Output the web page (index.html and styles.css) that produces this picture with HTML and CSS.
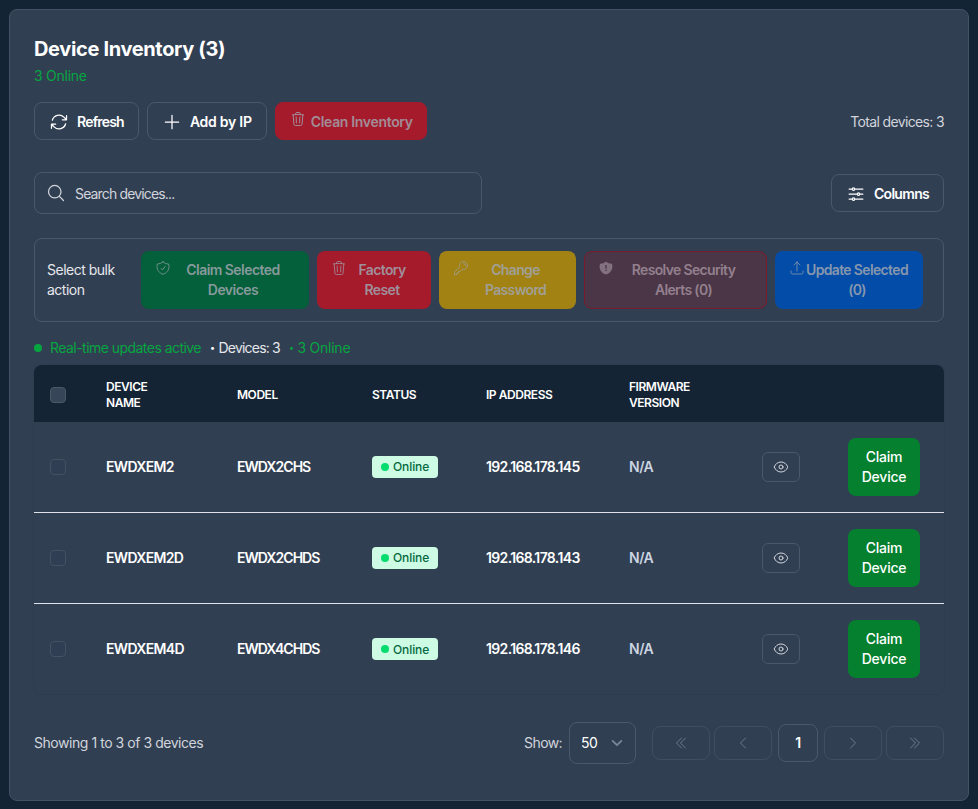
FILE: index.html
```html
<!DOCTYPE html>
<html lang="en">
<head>
    <meta charset="UTF-8">
    <meta name="viewport" content="width=device-width, initial-scale=1.0">
    <title>Device Inventory</title>
    <link rel="stylesheet" href="styles.css">
</head>
<body>
    <div class="card">
        <h1 class="title">Device Inventory (3)</h1>
        <div class="online-count">3 Online</div>

        <div class="toolbar">
            <button class="btn btn-outline btn-refresh">
                <svg class="icon-20" viewBox="0 0 24 24"><path d="M16.023 9.348h4.992v-.001M2.985 19.644v-4.992m0 0h4.992m-4.993 0 3.181 3.183a8.25 8.25 0 0 0 13.803-3.7M4.031 9.865a8.25 8.25 0 0 1 13.803-3.7l3.181 3.182m0-4.991v4.99"/></svg>
                Refresh
            </button>
            <button class="btn btn-outline btn-add">
                <svg class="icon-20" viewBox="0 0 24 24"><path d="M12 4v16m8-8H4"/></svg>
                Add by IP
            </button>
            <button class="btn btn-clean" disabled>
                <svg class="icon-16" viewBox="0 0 24 24"><path d="m14.74 9-.346 9m-4.788 0L9.26 9m9.968-3.21c.342.052.682.107 1.022.166m-1.022-.165L18.16 19.673a2.25 2.25 0 0 1-2.244 2.077H8.084a2.25 2.25 0 0 1-2.244-2.077L4.772 5.79m14.456 0a48.108 48.108 0 0 0-3.478-.397m-12 .562c.34-.059.68-.114 1.022-.165m0 0a48.11 48.11 0 0 1 3.478-.397m7.5 0v-.916c0-1.18-.91-2.164-2.09-2.201a51.964 51.964 0 0 0-3.32 0c-1.18.037-2.09 1.022-2.09 2.201v.916m7.5 0a48.667 48.667 0 0 0-7.5 0"/></svg>
                Clean Inventory
            </button>
            <div class="total">Total devices: 3</div>
        </div>

        <div class="search-row">
            <label class="search">
                <svg class="icon-20" viewBox="0 0 24 24"><path d="m21 21-5.197-5.197m0 0A7.5 7.5 0 1 0 5.196 5.196a7.5 7.5 0 0 0 10.607 10.607Z"/></svg>
                <input class="search-input" type="text" placeholder="Search devices...">
            </label>
            <button class="btn btn-outline btn-columns">
                <svg class="icon-20" viewBox="0 0 24 24"><path d="M10.5 6h9.75M10.5 6a1.5 1.5 0 1 1-3 0m3 0a1.5 1.5 0 1 0-3 0M3.75 6H7.5m3 12h9.75m-9.75 0a1.5 1.5 0 0 1-3 0m3 0a1.5 1.5 0 0 0-3 0m-3.75 0H7.5m9-6h3.75m-3.75 0a1.5 1.5 0 0 1-3 0m3 0a1.5 1.5 0 0 0-3 0m-9.75 0h9.75"/></svg>
                Columns
            </button>
        </div>

        <div class="bulk">
            <div class="bulk-label">Select bulk action</div>
            <button class="bulk-btn bulk-claim" disabled>
                <svg class="icon-16" viewBox="0 0 24 24"><path d="M9 12.75 11.25 15 15 9.75m-3-7.036A11.959 11.959 0 0 1 3.598 6 11.99 11.99 0 0 0 3 9.749c0 5.592 3.824 10.29 9 11.623 5.176-1.332 9-6.03 9-11.622 0-1.31-.21-2.571-.598-3.751h-.152c-3.196 0-6.1-1.248-8.25-3.285Z"/></svg>
                <span class="bulk-text">Claim Selected Devices</span>
            </button>
            <button class="bulk-btn bulk-reset" disabled>
                <svg class="icon-16" viewBox="0 0 24 24"><path d="m14.74 9-.346 9m-4.788 0L9.26 9m9.968-3.21c.342.052.682.107 1.022.166m-1.022-.165L18.16 19.673a2.25 2.25 0 0 1-2.244 2.077H8.084a2.25 2.25 0 0 1-2.244-2.077L4.772 5.79m14.456 0a48.108 48.108 0 0 0-3.478-.397m-12 .562c.34-.059.68-.114 1.022-.165m0 0a48.11 48.11 0 0 1 3.478-.397m7.5 0v-.916c0-1.18-.91-2.164-2.09-2.201a51.964 51.964 0 0 0-3.32 0c-1.18.037-2.09 1.022-2.09 2.201v.916m7.5 0a48.667 48.667 0 0 0-7.5 0"/></svg>
                <span class="bulk-text">Factory Reset</span>
            </button>
            <button class="bulk-btn bulk-password" disabled>
                <svg class="icon-16" viewBox="0 0 24 24"><path d="M15.75 5.25a3 3 0 0 1 3 3m3 0a6 6 0 0 1-7.029 5.912c-.563-.097-1.159.026-1.563.43L10.5 17.25H8.25v2.25H6v2.25H2.25v-2.818c0-.597.237-1.17.659-1.591l6.499-6.499c.404-.404.527-1 .43-1.563A6 6 0 1 1 21.75 8.25Z"/></svg>
                <span class="bulk-text">Change Password</span>
            </button>
            <button class="bulk-btn bulk-resolve" disabled>
                <svg class="icon-16 icon-solid" viewBox="0 0 24 24"><path fill-rule="evenodd" d="M12 2.2c2.3 2.2 5.3 3.4 8.6 3.4h.3c.5 1.4.7 2.8.7 4.2 0 5.8-4 10.6-9.6 12-5.6-1.4-9.6-6.2-9.6-12 0-1.4.2-2.8.7-4.2h.3c3.300 0 6.300-1.200 8.600-3.400ZM11 7.500v5.500h2V7.500h-2Zm0 7v2h2v-2h-2Z"/></svg>
                <span class="bulk-text">Resolve Security Alerts (0)</span>
            </button>
            <button class="bulk-btn bulk-update" disabled>
                <svg class="icon-16" viewBox="0 0 24 24"><path d="M3 16.5v2.250A2.250 2.250 0 0 0 5.250 21h13.500A2.250 2.250 0 0 0 21 18.750V16.500m-13.500-9L12 3m0 0 4.500 4.500M12 3v13.500"/></svg>
                <span class="bulk-text">Update Selected (0)</span>
            </button>
        </div>

        <div class="realtime">
            <span class="realtime-dot"></span>
            <span class="realtime-active">Real-time updates active</span>
            <span class="realtime-sep">&bull;</span>
            <span class="realtime-devices">Devices: 3</span>
            <span class="realtime-sep realtime-sep-green">&bull;</span>
            <span class="realtime-online">3 Online</span>
        </div>

        <div class="table-wrap">
            <table class="devices">
                <colgroup>
                    <col class="col-check">
                    <col class="col-name">
                    <col class="col-model">
                    <col class="col-status">
                    <col class="col-ip">
                    <col class="col-firmware">
                    <col class="col-view">
                    <col class="col-action">
                </colgroup>
                <thead>
                    <tr>
                        <th><input class="check check-head" type="checkbox"></th>
                        <th>Device<br>Name</th>
                        <th>Model</th>
                        <th>Status</th>
                        <th>IP Address</th>
                        <th>Firmware<br>Version</th>
                        <th></th>
                        <th></th>
                    </tr>
                </thead>
                <tbody>
                    <tr>
                        <td><input class="check" type="checkbox"></td>
                        <td class="strong">EWDXEM2</td>
                        <td class="strong model">EWDX2CHS</td>
                        <td><span class="badge"><span class="badge-dot"></span>Online</span></td>
                        <td class="strong">192.168.178.145</td>
                        <td class="muted">N/A</td>
                        <td><button class="eye-btn"><svg class="icon-16" viewBox="0 0 24 24"><path d="M2.036 12.322a1.012 1.012 0 0 1 0-.639C3.423 7.510 7.360 4.500 12 4.500c4.638 0 8.573 3.007 9.963 7.178.07.207.07.431 0 .639C20.577 16.490 16.640 19.500 12 19.500c-4.638 0-8.573-3.007-9.963-7.178Z"/><path d="M15 12a3 3 0 1 1-6 0 3 3 0 0 1 6 0Z"/></svg></button></td>
                        <td><button class="claim-btn">Claim Device</button></td>
                    </tr>
                    <tr>
                        <td><input class="check" type="checkbox"></td>
                        <td class="strong">EWDXEM2D</td>
                        <td class="strong model">EWDX2CHDS</td>
                        <td><span class="badge"><span class="badge-dot"></span>Online</span></td>
                        <td class="strong">192.168.178.143</td>
                        <td class="muted">N/A</td>
                        <td><button class="eye-btn"><svg class="icon-16" viewBox="0 0 24 24"><path d="M2.036 12.322a1.012 1.012 0 0 1 0-.639C3.423 7.510 7.360 4.500 12 4.500c4.638 0 8.573 3.007 9.963 7.178.07.207.07.431 0 .639C20.577 16.490 16.640 19.500 12 19.500c-4.638 0-8.573-3.007-9.963-7.178Z"/><path d="M15 12a3 3 0 1 1-6 0 3 3 0 0 1 6 0Z"/></svg></button></td>
                        <td><button class="claim-btn">Claim Device</button></td>
                    </tr>
                    <tr>
                        <td><input class="check" type="checkbox"></td>
                        <td class="strong">EWDXEM4D</td>
                        <td class="strong model">EWDX4CHDS</td>
                        <td><span class="badge"><span class="badge-dot"></span>Online</span></td>
                        <td class="strong">192.168.178.146</td>
                        <td class="muted">N/A</td>
                        <td><button class="eye-btn"><svg class="icon-16" viewBox="0 0 24 24"><path d="M2.036 12.322a1.012 1.012 0 0 1 0-.639C3.423 7.510 7.360 4.500 12 4.500c4.638 0 8.573 3.007 9.963 7.178.07.207.07.431 0 .639C20.577 16.490 16.640 19.500 12 19.500c-4.638 0-8.573-3.007-9.963-7.178Z"/><path d="M15 12a3 3 0 1 1-6 0 3 3 0 0 1 6 0Z"/></svg></button></td>
                        <td><button class="claim-btn">Claim Device</button></td>
                    </tr>
                </tbody>
            </table>
        </div>

        <div class="footer">
            <div class="showing">Showing 1 to 3 of 3 devices</div>
            <div class="show-label">Show:</div>
            <div class="page-size">
                <span>50</span>
                <svg class="icon-chevron" viewBox="0 0 24 24"><path d="m19.500 8.250-7.500 7.500-7.500-7.500"/></svg>
            </div>
            <div class="pager">
                <button class="page-btn" disabled><svg class="icon-16" viewBox="0 0 24 24"><path d="m18.750 4.500-7.500 7.500 7.500 7.500m-6-15L5.250 12l7.500 7.500"/></svg></button>
                <button class="page-btn" disabled><svg class="icon-16" viewBox="0 0 24 24"><path d="M15.750 19.500 8.250 12l7.500-7.500"/></svg></button>
                <button class="page-current">1</button>
                <button class="page-btn" disabled><svg class="icon-16" viewBox="0 0 24 24"><path d="m8.250 4.500 7.500 7.500-7.500 7.500"/></svg></button>
                <button class="page-btn" disabled><svg class="icon-16" viewBox="0 0 24 24"><path d="m5.250 4.500 7.500 7.500-7.500 7.500m6-15 7.500 7.500-7.500 7.500"/></svg></button>
            </div>
        </div>
    </div>
</body>
</html>
```

FILE: styles.css
```css
* {
    box-sizing: border-box;
}

body {
    margin: 0;
    padding: 9px;
    background-color: #132435;
    color: #fff;
    font-family: 'Inter', 'Liberation Sans', sans-serif;
    font-size: 14px;
    line-height: 20px;
    letter-spacing: -0.5px;
}

button {
    font-family: inherit;
    line-height: inherit;
    letter-spacing: inherit;
}

svg {
    fill: none;
    stroke: currentColor;
    stroke-width: 1.5;
    stroke-linecap: round;
    stroke-linejoin: round;
    flex-shrink: 0;
}

.icon-20 {
    width: 20px;
    height: 20px;
}

.icon-16 {
    width: 16px;
    height: 16px;
}

.icon-solid {
    fill: currentColor;
    stroke: none;
}

.card {
    background-color: #313f53;
    border: 1px solid #445164;
    border-radius: 8px;
    padding: 24px;
}

.title {
    margin: 0;
    padding-top: 1px;
    height: 28px;
    font-size: 20px;
    line-height: 28px;
    font-weight: 700;
    letter-spacing: -0.35px;
}

.online-count {
    margin-top: 4px;
    color: #05a63f;
    letter-spacing: -0.25px;
}

.toolbar {
    display: flex;
    align-items: center;
    gap: 8px;
    margin-top: 16px;
}

.total {
    margin-left: auto;
    padding-top: 1px;
    color: #d1d5db;
    letter-spacing: -0.65px;
}

.btn {
    display: flex;
    height: 38px;
    align-items: center;
    gap: 8px;
    padding: 0 14px;
    border-radius: 8px;
    font-size: 14px;
    font-weight: 600;
    color: #fff;
}

.btn-outline {
    padding-top: 1px;
    background: transparent;
    border: 1px solid #4b5869;
}

.btn-refresh {
    letter-spacing: -0.8px;
}

.btn-add {
    letter-spacing: -0.25px;
}

.btn-columns {
    letter-spacing: -0.7px;
}

.btn-clean {
    align-items: flex-start;
    gap: 5px;
    padding: 9px 13px 0 14px;
    background-color: #a51b2c;
    border: 1px solid #a51b2c;
    color: #a28c96;
    letter-spacing: -0.33px;
}

.btn-clean svg {
    margin-top: -1px;
}

.search-row {
    display: flex;
    justify-content: space-between;
    align-items: center;
    margin-top: 32px;
}

.search {
    display: flex;
    width: 448px;
    height: 42px;
    align-items: center;
    gap: 9px;
    padding-left: 11px;
    border: 1px solid #4b5869;
    border-radius: 8px;
    color: #d1d5db;
}

.search-input {
    flex: 1;
    min-width: 0;
    padding: 0;
    border: 0;
    outline: none;
    background: transparent;
    color: #fff;
    font-family: inherit;
    font-size: 14px;
    letter-spacing: -0.85px;
}

.search-input::placeholder {
    color: #d1d5db;
    opacity: 1;
}

.bulk {
    display: flex;
    align-items: center;
    gap: 8px;
    margin-top: 24px;
    padding: 12px;
    border: 1px solid #4b5869;
    border-radius: 8px;
}

.bulk-label {
    width: 82px;
    margin-right: 4px;
    color: #e5e7eb;
}

.bulk-btn {
    display: flex;
    height: 58px;
    align-items: flex-start;
    padding: 8px 13px;
    border: 1px solid transparent;
    border-radius: 8px;
    color: rgba(160, 165, 175, 0.85);
    font-size: 14px;
    line-height: 20px;
    font-weight: 600;
    letter-spacing: -0.65px;
}

.bulk-btn svg {
    opacity: 0.8;
}

.bulk-text {
    flex: 1;
    text-align: center;
}

.bulk-claim {
    width: 168px;
    background-color: #04603b;
    letter-spacing: -0.55px;
}

.bulk-reset {
    width: 114px;
    background-color: #a51b2c;
}

.bulk-password {
    width: 137px;
    background-color: #a28213;
}

.bulk-resolve {
    width: 183px;
    background-color: #4b3647;
    border-color: #7a1a2c;
    color: #93808e;
}

.bulk-update {
    width: 148px;
    background-color: #034da8;
}

.realtime {
    display: flex;
    align-items: center;
    margin-top: 16px;
    color: #05a63f;
}

.realtime-dot {
    width: 8px;
    height: 8px;
    margin-right: 8px;
    border-radius: 50%;
    background-color: #05a63f;
}

.realtime-active {
    letter-spacing: -0.54px;
}

.realtime-sep {
    margin: 0 4px 0 9px;
    color: #fff;
    font-size: 9px;
}

.realtime-sep-green {
    color: #05a63f;
}

.realtime-devices {
    color: #e5e7eb;
    letter-spacing: -0.8px;
}

.realtime-online {
    letter-spacing: -0.25px;
}

.table-wrap {
    margin-top: 7px;
    border-radius: 8px;
    box-shadow: 0 0 0 1px #2e3c4f;
    overflow: hidden;
}

.devices {
    width: 100%;
    border-collapse: separate;
    border-spacing: 0;
    table-layout: fixed;
}

.col-check { width: 56px; }
.col-name { width: 131px; }
.col-model { width: 135px; }
.col-status { width: 114px; }
.col-ip { width: 143px; }
.col-firmware { width: 133px; }
.col-view { width: 86px; }
.col-action { width: 112px; }

.devices th {
    height: 57px;
    padding: 2px 16px 0;
    background-color: #142434;
    font-size: 12px;
    line-height: 16px;
    font-weight: 600;
    letter-spacing: -0.45px;
    text-align: left;
    text-transform: uppercase;
}

.devices td {
    height: 91px;
    padding: 0 0 1px 16px;
    border-bottom: 1px solid #dfe3e8;
}

.devices tr:last-child td {
    height: 90px;
    padding-bottom: 0;
    border-bottom: 0;
}

.strong {
    font-weight: 600;
    letter-spacing: -0.65px;
}

.strong.model {
    letter-spacing: -0.95px;
}

.muted {
    color: #cbd5e1;
    font-weight: 600;
}

.check {
    appearance: none;
    display: block;
    width: 16px;
    height: 16px;
    margin: 0;
    border: 1px solid #455264;
    border-radius: 4px;
    background-color: #2f3e52;
}

.check-head {
    background-color: #374558;
    border-color: #4b5869;
}

.badge {
    display: inline-flex;
    height: 22px;
    align-items: center;
    gap: 4px;
    padding: 1px 9px 0 9px;
    border-radius: 4px;
    background-color: #cdfbe4;
    color: #04693f;
    font-size: 12px;
    font-weight: 500;
    letter-spacing: -0.1px;
}

.badge-dot {
    width: 8px;
    height: 8px;
    margin-top: -1px;
    border-radius: 50%;
    background-color: #04dc6e;
}

.eye-btn {
    display: flex;
    width: 38px;
    height: 30px;
    align-items: center;
    justify-content: center;
    padding: 0;
    background: transparent;
    border: 1px solid #4b5869;
    border-radius: 6px;
    color: #d1d5db;
}

.claim-btn {
    display: block;
    width: 72px;
    height: 58px;
    padding: 0 12px;
    border: 0;
    border-radius: 8px;
    background-color: #05802e;
    color: #fff;
    font-size: 14px;
    line-height: 20px;
    font-weight: 500;
    letter-spacing: -0.2px;
}

.footer {
    display: flex;
    align-items: center;
    margin: 28px 0 12px;
}

.showing {
    margin-right: auto;
    color: #d1d5db;
    letter-spacing: -0.45px;
}

.show-label {
    margin-right: 7px;
    color: #d1d5db;
    letter-spacing: -0.6px;
}

.page-size {
    display: flex;
    width: 67px;
    height: 42px;
    align-items: center;
    justify-content: space-between;
    padding: 0 11px;
    border: 1px solid #4b5869;
    border-radius: 8px;
}

.icon-chevron {
    width: 14px;
    height: 14px;
    color: #7c8796;
    stroke-width: 3;
}

.pager {
    display: flex;
    align-items: center;
    margin-left: 16px;
}

.page-btn {
    display: flex;
    width: 58px;
    height: 34px;
    align-items: center;
    justify-content: center;
    padding: 0;
    background: transparent;
    border: 1px solid #414e60;
    border-radius: 8px;
    color: #6d7a8a;
}

.page-btn + .page-btn {
    margin-left: 4px;
}

.page-current {
    width: 40px;
    height: 38px;
    margin: 0 6px;
    padding: 0;
    background: transparent;
    border: 1px solid #4b5869;
    border-radius: 8px;
    color: #fff;
    font-size: 14px;
    font-weight: 600;
}
```
